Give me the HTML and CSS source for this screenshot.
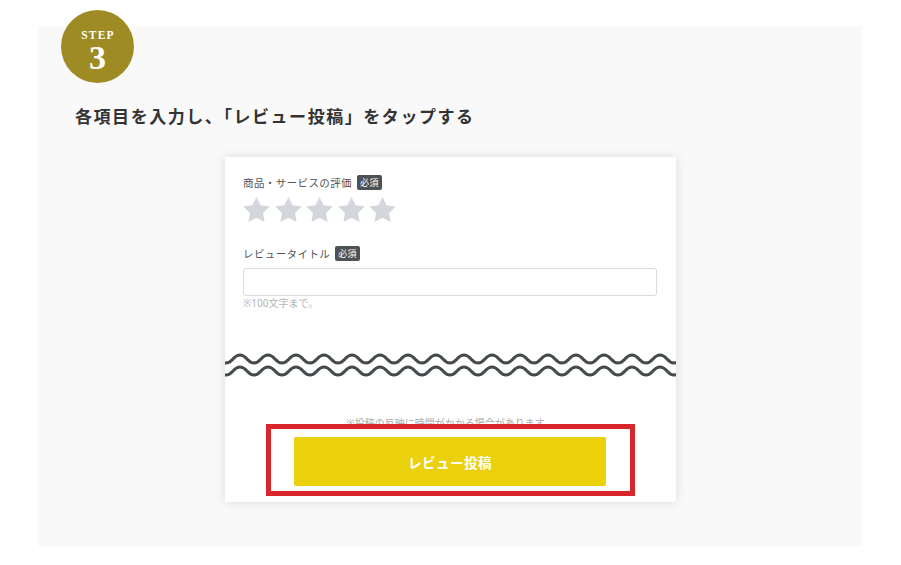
FILE: index.html
```html
<!DOCTYPE html>
<html lang="ja">
<head>
<meta charset="utf-8">
<title>STEP 3</title>
<link rel="stylesheet" href="styles.css">
</head>
<body>
<section class="panel">
  <div class="step-badge">
    <span class="step-label">STEP</span>
    <span class="step-num">3</span>
  </div>
  <h2 class="heading">各項目を入力し、「レビュー投稿」をタップする</h2>
  <div class="card">
    <div class="field-label">商品・サービスの評価<span class="req">必須</span></div>
    <div class="stars">
      <svg class="star" viewBox="2 2 20 19.1"><path d="M12 2l3.09 6.26L22 9.27l-5 4.87 1.18 6.88L12 17.77l-6.18 3.25L7 14.14 2 9.27l6.91-1.01L12 2z"/></svg>
      <svg class="star" viewBox="2 2 20 19.1"><path d="M12 2l3.09 6.26L22 9.27l-5 4.87 1.18 6.88L12 17.77l-6.18 3.25L7 14.14 2 9.27l6.91-1.01L12 2z"/></svg>
      <svg class="star" viewBox="2 2 20 19.1"><path d="M12 2l3.09 6.26L22 9.27l-5 4.87 1.18 6.88L12 17.77l-6.18 3.25L7 14.14 2 9.27l6.91-1.01L12 2z"/></svg>
      <svg class="star" viewBox="2 2 20 19.1"><path d="M12 2l3.09 6.26L22 9.27l-5 4.87 1.18 6.88L12 17.77l-6.18 3.25L7 14.14 2 9.27l6.91-1.01L12 2z"/></svg>
      <svg class="star" viewBox="2 2 20 19.1"><path d="M12 2l3.09 6.26L22 9.27l-5 4.87 1.18 6.88L12 17.77l-6.18 3.25L7 14.14 2 9.27l6.91-1.01L12 2z"/></svg>
    </div>
    <div class="field-label second">レビュータイトル<span class="req">必須</span></div>
    <div class="input"></div>
    <div class="hint">※100文字まで。</div>
    <svg class="waves" viewBox="0 0 451 28" preserveAspectRatio="none">
      <path id="w" d="M-6 9 Q1 17 8 9 T22 9 T36 9 T50 9 T64 9 T78 9 T92 9 T106 9 T120 9 T134 9 T148 9 T162 9 T176 9 T190 9 T204 9 T218 9 T232 9 T246 9 T260 9 T274 9 T288 9 T302 9 T316 9 T330 9 T344 9 T358 9 T372 9 T386 9 T400 9 T414 9 T428 9 T442 9 T456 9 T470 9"/>
      <use href="#w" transform="translate(0 12)"/>
    </svg>
    <div class="note">※投稿の反映に時間がかかる場合があります。</div>
    <div class="btn-wrap">
      <div class="btn">レビュー投稿</div>
      <div class="highlight"></div>
    </div>
  </div>
</section>
</body>
</html>
```
FILE: styles.css
```css
html, body {
  margin: 0;
  padding: 0;
  background: #ffffff;
}
body {
  font-family: "Noto Sans", "Noto Sans CJK JP", sans-serif;
}
.panel {
  position: relative;
  box-sizing: border-box;
  margin: 26px 0 0 38px;
  width: 824px;
  height: 520px;
  background: #f9f9f9;
  padding: 79px 0 0 37px;
}
.step-badge {
  position: absolute;
  left: 23px;
  top: -16px;
  width: 73px;
  height: 73px;
  border-radius: 50%;
  background: #9f8b23;
  color: #fff;
  display: flex;
  flex-direction: column;
  align-items: center;
  font-family: "Liberation Serif", "DejaVu Serif", serif;
  font-weight: bold;
}
.step-label {
  margin-top: 19px;
  font-size: 11.5px;
  line-height: 12px;
  letter-spacing: 1.2px;
  padding-left: 1px;
}
.step-num {
  font-size: 34px;
  line-height: 34px;
  margin-top: 0;
}
.heading {
  margin: 0;
  font-size: 17px;
  line-height: 24px;
  font-weight: bold;
  color: #333;
  letter-spacing: 1.55px;
}
.card {
  box-sizing: border-box;
  width: 451px;
  height: 345px;
  margin: 28px 0 0 150px;
  background: #fff;
  box-shadow: 0 0 10px rgba(0, 0, 0, 0.12);
  padding: 17px 19px 0 18px;
  display: flex;
  flex-direction: column;
}
.field-label {
  display: flex;
  align-items: center;
  height: 16px;
  font-size: 10.5px;
  color: #555;
  letter-spacing: 0.4px;
}
.field-label.second {
  margin-top: 24px;
}
.req {
  margin-left: 5px;
  background: #4d5255;
  color: #fff;
  font-size: 9px;
  line-height: 15px;
  height: 15px;
  padding: 0 3px;
  border-radius: 2px;
}
.stars {
  display: flex;
  gap: 4.5px;
  margin-top: 7px;
  height: 24px;
}
.star {
  width: 27px;
  height: 25px;
  fill: #d3d6dc;
}
.input {
  margin-top: 7px;
  height: 28px;
  box-sizing: border-box;
  border: 1px solid #dcdcdc;
  border-radius: 3px;
  background: #fff;
}
.hint {
  font-size: 10px;
  line-height: 14px;
  color: #b5b5b5;
}
.waves {
  display: block;
  margin: 40px -19px 0 -18px;
  width: 451px;
  height: 28px;
  fill: none;
  stroke: #454a4c;
  stroke-width: 3px;
}
.note {
  margin-top: 38px;
  text-align: center;
  font-size: 10px;
  line-height: 14px;
  color: #aaa;
}
.btn-wrap {
  position: relative;
  margin: 7px 0 0 51px;
  width: 312px;
}
.btn {
  height: 49px;
  background: #ebd00c;
  border-radius: 2px;
  color: #fff;
  font-weight: bold;
  font-size: 13.5px;
  display: flex;
  align-items: center;
  justify-content: center;
  letter-spacing: 0.5px;
}
.highlight {
  position: absolute;
  left: -28px;
  right: -29px;
  top: -13px;
  bottom: -10px;
  border: 5px solid #d8262b;
}
```
